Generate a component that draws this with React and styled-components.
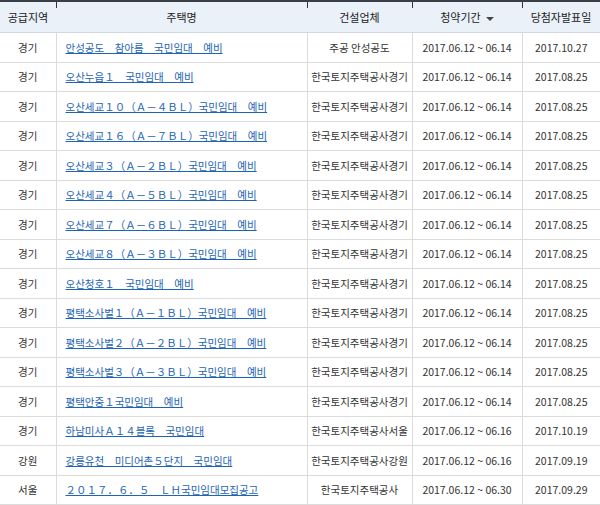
import React from "react";
import styled, { createGlobalStyle } from "styled-components";

const G = createGlobalStyle`
  body { margin:0; background:#fff; font-family:"Noto Sans CJK KR","Liberation Sans",sans-serif; }
`;
const Table = styled.table`
  width:600px; border-collapse:collapse; table-layout:fixed; font-size:10.5px; color:#333;
  border-top:2px solid #3a3f48;
`;
const Th = styled.th`
  height:30px; background:#eaf1f8; font-weight:normal; color:#222; font-size:11px;
  border-bottom:1px solid #cfd8e2; position:relative; padding:0;
  &:not(:first-child)::before{content:"";position:absolute;left:0;top:0;height:6px;border-left:1px solid #333;}
`;
const Td = styled.td`
  height:28.5px; padding:0; text-align:${p=>p.$left?"left":"center"};
  padding-left:${p=>p.$left?"9px":"0"};
  border-bottom:1px solid #dcdcdc;
  & + & { border-left:1px solid #dcdcdc; }
  white-space:nowrap; overflow:hidden;
`;
const Link = styled.a`color:#1e64b4; text-decoration:underline; white-space:pre;`;
const Arrow = styled.span`display:inline-block;margin-left:5px;border:4px solid transparent;border-top:4px solid #444;border-bottom:0;vertical-align:middle;`;

const rows = [
 ["경기","안성공도　참아름　국민임대　예비","주공 안성공도","06.14","2017.10.27"],
 ["경기","오산누읍１　국민임대　예비","한국토지주택공사경기","06.14","2017.08.25"],
 ["경기","오산세교１０（Ａ－４ＢＬ）국민임대　예비","한국토지주택공사경기","06.14","2017.08.25"],
 ["경기","오산세교１６（Ａ－７ＢＬ）국민임대　예비","한국토지주택공사경기","06.14","2017.08.25"],
 ["경기","오산세교３（Ａ－２ＢＬ）국민임대　예비","한국토지주택공사경기","06.14","2017.08.25"],
 ["경기","오산세교４（Ａ－５ＢＬ）국민임대　예비","한국토지주택공사경기","06.14","2017.08.25"],
 ["경기","오산세교７（Ａ－６ＢＬ）국민임대　예비","한국토지주택공사경기","06.14","2017.08.25"],
 ["경기","오산세교８（Ａ－３ＢＬ）국민임대　예비","한국토지주택공사경기","06.14","2017.08.25"],
 ["경기","오산청호１　국민임대　예비","한국토지주택공사경기","06.14","2017.08.25"],
 ["경기","평택소사벌１（Ａ－１ＢＬ）국민임대　예비","한국토지주택공사경기","06.14","2017.08.25"],
 ["경기","평택소사벌２（Ａ－２ＢＬ）국민임대　예비","한국토지주택공사경기","06.14","2017.08.25"],
 ["경기","평택소사벌３（Ａ－３ＢＬ）국민임대　예비","한국토지주택공사경기","06.14","2017.08.25"],
 ["경기","평택안중１국민임대　예비","한국토지주택공사경기","06.14","2017.08.25"],
 ["경기","하남미사Ａ１４블록　국민임대","한국토지주택공사서울","06.16","2017.10.19"],
 ["강원","강릉유천　미디어촌５단지　국민임대","한국토지주택공사강원","06.16","2017.09.19"],
 ["서울","２０１７．６．５　ＬＨ국민임대모집공고","한국토지주택공사","06.30","2017.09.29"],
];

export default function App(){
  return <><G/>
  <Table>
    <colgroup><col style={{width:56}}/><col style={{width:251}}/><col style={{width:105}}/><col style={{width:110}}/><col style={{width:78}}/></colgroup>
    <thead><tr><Th>공급지역</Th><Th>주택명</Th><Th>건설업체</Th><Th>청약기간<Arrow/></Th><Th>당첨자발표일</Th></tr></thead>
    <tbody>{rows.map((r,i)=><tr key={i}>
      <Td>{r[0]}</Td><Td $left><Link>{r[1]}</Link></Td><Td>{r[2]}</Td><Td>2017.06.12 ~ {r[3]}</Td><Td>{r[4]}</Td>
    </tr>)}</tbody>
  </Table></>;
}
